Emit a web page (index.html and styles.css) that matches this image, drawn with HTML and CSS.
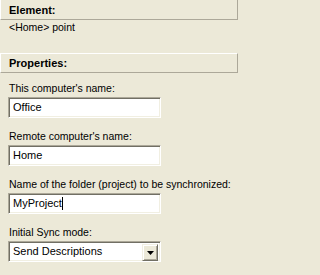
FILE: index.html
```html
<!DOCTYPE html>
<html>
<head>
<meta charset="utf-8">
<link rel="stylesheet" href="styles.css">
</head>
<body>
<div class="panel">
  <div class="hdr">Element:</div>
  <div class="elem">&lt;Home&gt; point</div>
  <div class="hdr">Properties:</div>
  <div class="props">
    <div class="field">
      <div class="lbl">This computer's name:</div>
      <div class="box">Office</div>
    </div>
    <div class="field">
      <div class="lbl">Remote computer's name:</div>
      <div class="box">Home</div>
    </div>
    <div class="field">
      <div class="lbl">Name of the folder (project) to be synchronized:</div>
      <div class="box">MyProject<span class="caret"></span></div>
    </div>
    <div class="field">
      <div class="lbl">Initial Sync mode:</div>
      <div class="box select">
        <span class="val">Send Descriptions</span>
        <span class="drop"><svg width="7" height="4" viewBox="0 0 7 4"><path d="M0 0H7L3.5 4Z" fill="#000"/></svg></span>
      </div>
    </div>
  </div>
</div>
</body>
</html>
```

FILE: styles.css
```css
html {
  background: #ece9d8;
}
body {
  margin: 0;
  padding: 0;
  font-family: "Liberation Sans", Arial, sans-serif;
  font-size: 10.5px;
  line-height: 13px;
  color: #000;
  white-space: nowrap;
}
.panel {
  display: flex;
  flex-direction: column;
  width: 238px;
}
.hdr {
  height: 18px;
  box-sizing: content-box;
  border-top: 1px solid #fff;
  border-left: 1px solid #fff;
  border-right: 1px solid #aca899;
  border-bottom: 1px solid #aca899;
  font-weight: bold;
  font-size: 11px;
  padding-left: 8px;
  padding-top: 1px;
  height: 17px;
  display: flex;
  align-items: center;
}
.hdr:first-child {
  border-top: none;
  height: 18px;
}
.elem {
  height: 33px;
  padding-left: 9px;
  padding-top: 1px;
  box-sizing: border-box;
}
.props {
  display: flex;
  flex-direction: column;
  gap: 12px;
  padding: 9px 0 0 8px;
}
.field {
  display: flex;
  flex-direction: column;
  gap: 2px;
}
.lbl {
  padding-left: 1px;
}
.box {
  width: 153px;
  height: 21px;
  box-sizing: border-box;
  background: #fff;
  border-top: 1px solid #aca899;
  border-left: 1px solid #aca899;
  border-right: 1px solid #fff;
  border-bottom: 1px solid #fff;
  box-shadow: inset 1px 1px 0 #716f64, inset -1px -1px 0 #f1efe2;
  padding: 3px 0 0 4px;
  display: flex;
  align-items: flex-start;
  font-size: 11px;
}
.caret {
  width: 1px;
  height: 13px;
  background: #000;
}
.select {
  justify-content: space-between;
  padding: 2px 2px 2px 4px;
}
.val {
  padding-top: 1px;
}
.drop {
  width: 16px;
  height: 17px;
  box-sizing: border-box;
  background: #ece9d8;
  border-top: 1px solid #f1efe2;
  border-left: 1px solid #f1efe2;
  border-right: 1px solid #716f64;
  border-bottom: 1px solid #716f64;
  box-shadow: inset 1px 1px 0 #fff, inset -1px -1px 0 #aca899;
  display: flex;
  align-items: center;
  justify-content: center;
}
.drop svg {
  display: block;
}
```
